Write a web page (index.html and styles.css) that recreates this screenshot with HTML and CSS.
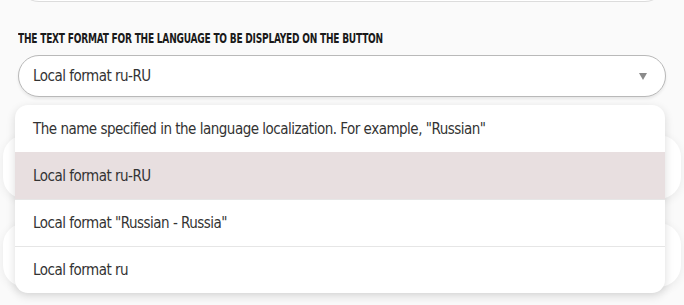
FILE: index.html
```html
<!DOCTYPE html>
<html lang="en">
<head>
<meta charset="utf-8">
<title>Language button format</title>
<link rel="stylesheet" href="styles.css">
</head>
<body>
<div class="page">
  <div class="prev-field"></div>
  <div class="field">
    <div class="label">The text format for the language to be displayed on the button</div>
    <div class="select">
      <span class="select-value">Local format ru-RU</span>
      <span class="select-arrow"></span>
    </div>
  </div>
  <div class="bg-card bg-card-a"></div>
  <div class="bg-card bg-card-b"></div>
  <ul class="menu">
    <li class="menu-item">The name specified in the language localization. For example, "Russian"</li>
    <li class="menu-item active">Local format ru-RU</li>
    <li class="menu-item">Local format "Russian - Russia"</li>
    <li class="menu-item">Local format ru</li>
  </ul>
</div>
</body>
</html>
```
FILE: styles.css
```css
html, body {
  margin: 0;
  padding: 0;
  background: #fafafa;
  width: 684px;
  height: 305px;
  overflow: hidden;
  font-family: "DejaVu Sans Condensed", "DejaVu Sans", sans-serif;
}
.page {
  position: relative;
  display: flow-root;
  width: 684px;
  height: 305px;
}
.prev-field {
  margin: -40px 18px 0 18px;
  height: 40px;
  border: 1px solid #dcdcdc;
  border-radius: 21px;
  background: #fff;
}
.field {
  padding: 28px 18px 0 18px;
}
.label {
  font-weight: bold;
  font-size: 13.5px;
  letter-spacing: -0.3px;
  text-transform: uppercase;
  color: #1a1a1a;
  line-height: 16px;
  white-space: nowrap;
  transform: scaleX(0.745);
  transform-origin: left center;
}
.select {
  margin-top: 9px;
  height: 40px;
  border: 1px solid #b9b9b9;
  border-radius: 21px;
  background: #fff;
  box-shadow: 0 2px 3px rgba(0,0,0,0.08);
  display: flex;
  align-items: center;
  justify-content: space-between;
  padding: 0 18px 0 14px;
}
.select-value {
  font-size: 15px;
  letter-spacing: -0.5px;
  color: #333;
}
.select-arrow {
  width: 0;
  height: 0;
  border-left: 4px solid transparent;
  border-right: 4px solid transparent;
  border-top: 7px solid #8a8a8a;
}
.bg-card {
  position: absolute;
  left: 3px;
  right: 3px;
  background: #fff;
  border-radius: 22px;
  box-shadow: 0 2px 10px rgba(0,0,0,0.07);
}
.bg-card-a { top: 135px; height: 64px; }
.bg-card-b { top: 223px; height: 64px; }
.menu {
  position: absolute;
  top: 105px;
  left: 15px;
  width: 650px;
  margin: 0;
  padding: 0;
  list-style: none;
  background: #fff;
  border-radius: 13px;
  box-shadow: 0 3px 10px rgba(0,0,0,0.14);
  overflow: hidden;
}
.menu-item {
  height: 47px;
  display: flex;
  align-items: center;
  padding-left: 18px;
  font-size: 15px;
  letter-spacing: -0.5px;
  color: #333;
  border-top: 1px solid #e6e6e6;
  box-sizing: border-box;
}
.menu-item:first-child { border-top: none; }
.menu-item.active { background: #e8dfe0; border-top-color: #e8dfe0; }
```
